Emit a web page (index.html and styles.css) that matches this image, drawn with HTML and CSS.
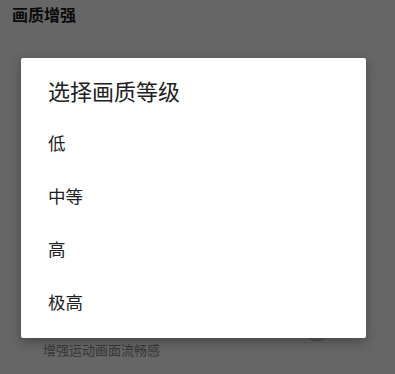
FILE: index.html
```html
<!DOCTYPE html>
<html lang="zh-CN">
<head>
<meta charset="utf-8">
<link rel="stylesheet" href="styles.css">
</head>
<body>
<div class="page">
  <div class="header">画质增强</div>
  <div class="setting">
    <div class="setting-sub">增强运动画面流畅感</div>
    <div class="switch"><span class="thumb"></span></div>
  </div>
</div>
<div class="overlay">
  <div class="dialog">
    <div class="dialog-title">选择画质等级</div>
    <ul class="options">
      <li>低</li>
      <li>中等</li>
      <li>高</li>
      <li>极高</li>
    </ul>
  </div>
</div>
</body>
</html>
```
FILE: styles.css
```css
html, body {
  margin: 0;
  padding: 0;
  background: #ffffff;
  font-family: Roboto, "Noto Sans CJK SC", sans-serif;
}
.page {
  width: 395px;
  height: 374px;
  position: relative;
}
.header {
  padding: 5px 12px 0;
  font-size: 16px;
  line-height: 21px;
  font-weight: bold;
  color: #1a1a1a;
}
.setting {
  display: flex;
  align-items: flex-start;
  justify-content: space-between;
  padding: 316px 52px 0 43px;
}
.setting-sub {
  font-size: 13px;
  line-height: 18px;
  color: #8a8a8a;
}
.switch {
  width: 34px;
  height: 14px;
  border-radius: 7px;
  background: #bdbdbd;
  position: relative;
  margin-top: -19px;
}
.thumb {
  position: absolute;
  left: -2px;
  top: -3px;
  width: 20px;
  height: 20px;
  border-radius: 50%;
  background: #e6e6e6;
  box-shadow: 0 1px 3px rgba(0,0,0,0.4);
}
.overlay {
  position: absolute;
  left: 0;
  top: 0;
  width: 395px;
  height: 374px;
  background: rgba(0, 0, 0, 0.6);
  box-sizing: border-box;
  padding: 58px 0 0 21px;
}
.dialog {
  width: 345px;
  height: 280px;
  box-sizing: border-box;
  background: #ffffff;
  border-radius: 2px;
  box-shadow: 0 4px 12px rgba(0,0,0,0.3);
  padding: 21px 0 0 27px;
}
.dialog-title {
  font-size: 22px;
  line-height: 28px;
  color: #212121;
  margin-bottom: 11px;
}
.options {
  list-style: none;
  margin: 0;
  padding: 0;
}
.options li {
  font-size: 17.5px;
  line-height: 53px;
  height: 53px;
  color: #212121;
}
```
